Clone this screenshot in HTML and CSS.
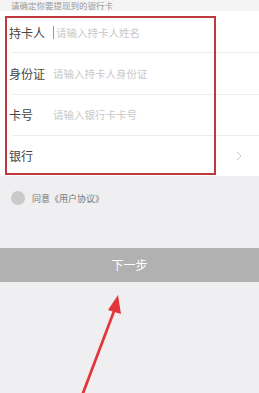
FILE: index.html
```html
<!DOCTYPE html>
<html lang="zh">
<head>
<meta charset="utf-8">
<link rel="stylesheet" href="styles.css">
</head>
<body>
<div class="page">
  <div class="hint">请确定你要提现到的银行卡</div>
  <div class="form">
    <div class="row">
      <span class="label">持卡人</span>
      <span class="cursor"></span>
      <span class="ph first">请输入持卡人姓名</span>
    </div>
    <div class="row">
      <span class="label">身份证</span>
      <span class="ph">请输入持卡人身份证</span>
    </div>
    <div class="row">
      <span class="label">卡号</span>
      <span class="ph">请输入银行卡卡号</span>
    </div>
    <div class="row last">
      <span class="label">银行</span>
      <svg class="chev" width="6" height="10" viewBox="0 0 6 10"><path d="M1 1 L5 5 L1 9" fill="none" stroke="#c8c8c8" stroke-width="1"/></svg>
    </div>
    <div class="redbox"></div>
  </div>
  <div class="agree">
    <span class="dot"></span>
    <span class="agree-text">同意《用户协议》</span>
  </div>
  <div class="btn">下一步</div>
  <svg class="arrow" width="259" height="120" viewBox="0 0 259 120">
    <path d="M77 122 L113 27 L115.5 28 L80 122 Z" fill="#e3363a"/>
    <path d="M118 12 L108 27 L121 31 Z" fill="#e3363a"/>
  </svg>
</div>
</body>
</html>
```

FILE: styles.css
```css
* { box-sizing: border-box; }
html, body { margin: 0; padding: 0; }
body {
  background: #efeff1;
  font-family: "Noto Sans CJK SC", "Noto Sans", sans-serif;
  width: 259px;
  height: 393px;
  overflow: hidden;
}
.page {
  position: relative;
  width: 259px;
  height: 393px;
}
.hint {
  height: 11px;
  font-size: 8.5px;
  line-height: 10px;
  color: #9a9a9a;
  padding-left: 11px;
  background: #f4f4f4;
}
.form {
  position: relative;
  background: #fff;
  padding-top: 1px;
}
.row {
  display: flex;
  align-items: center;
  height: 41.3px;
  margin-left: 12px;
  border-bottom: 1px solid #ececec;
  position: relative;
}
.row.last { border-bottom: none; height: 40px; }
.label {
  font-size: 12px;
  color: #444;
  width: 44px;
  margin-left: -3px;
}
.cursor {
  width: 1px;
  height: 13px;
  background: #999;
}
.ph {
  font-size: 10.5px;
  color: #c8c8c8;
}
.ph.first { margin-left: 2px; }
.chev {
  position: absolute;
  right: 17px;
  top: 15px;
}
.redbox {
  position: absolute;
  left: 5px;
  top: 5px;
  width: 211px;
  height: 159px;
  border: 2px solid #c0393f;
  pointer-events: none;
}
.agree {
  display: flex;
  align-items: center;
  padding: 12px 0 0 11px;
  height: 33px;
}
.dot {
  width: 14px;
  height: 14px;
  border-radius: 50%;
  background: #c9c9c9;
}
.agree-text {
  font-size: 9px;
  color: #777;
  margin-left: 7px;
}
.btn {
  margin-top: 39px;
  height: 34px;
  background: #b1b1b1;
  color: #fff;
  font-size: 12px;
  display: flex;
  align-items: center;
  justify-content: center;
}
.arrow {
  position: absolute;
  left: 0;
  top: 283px;
}
```
